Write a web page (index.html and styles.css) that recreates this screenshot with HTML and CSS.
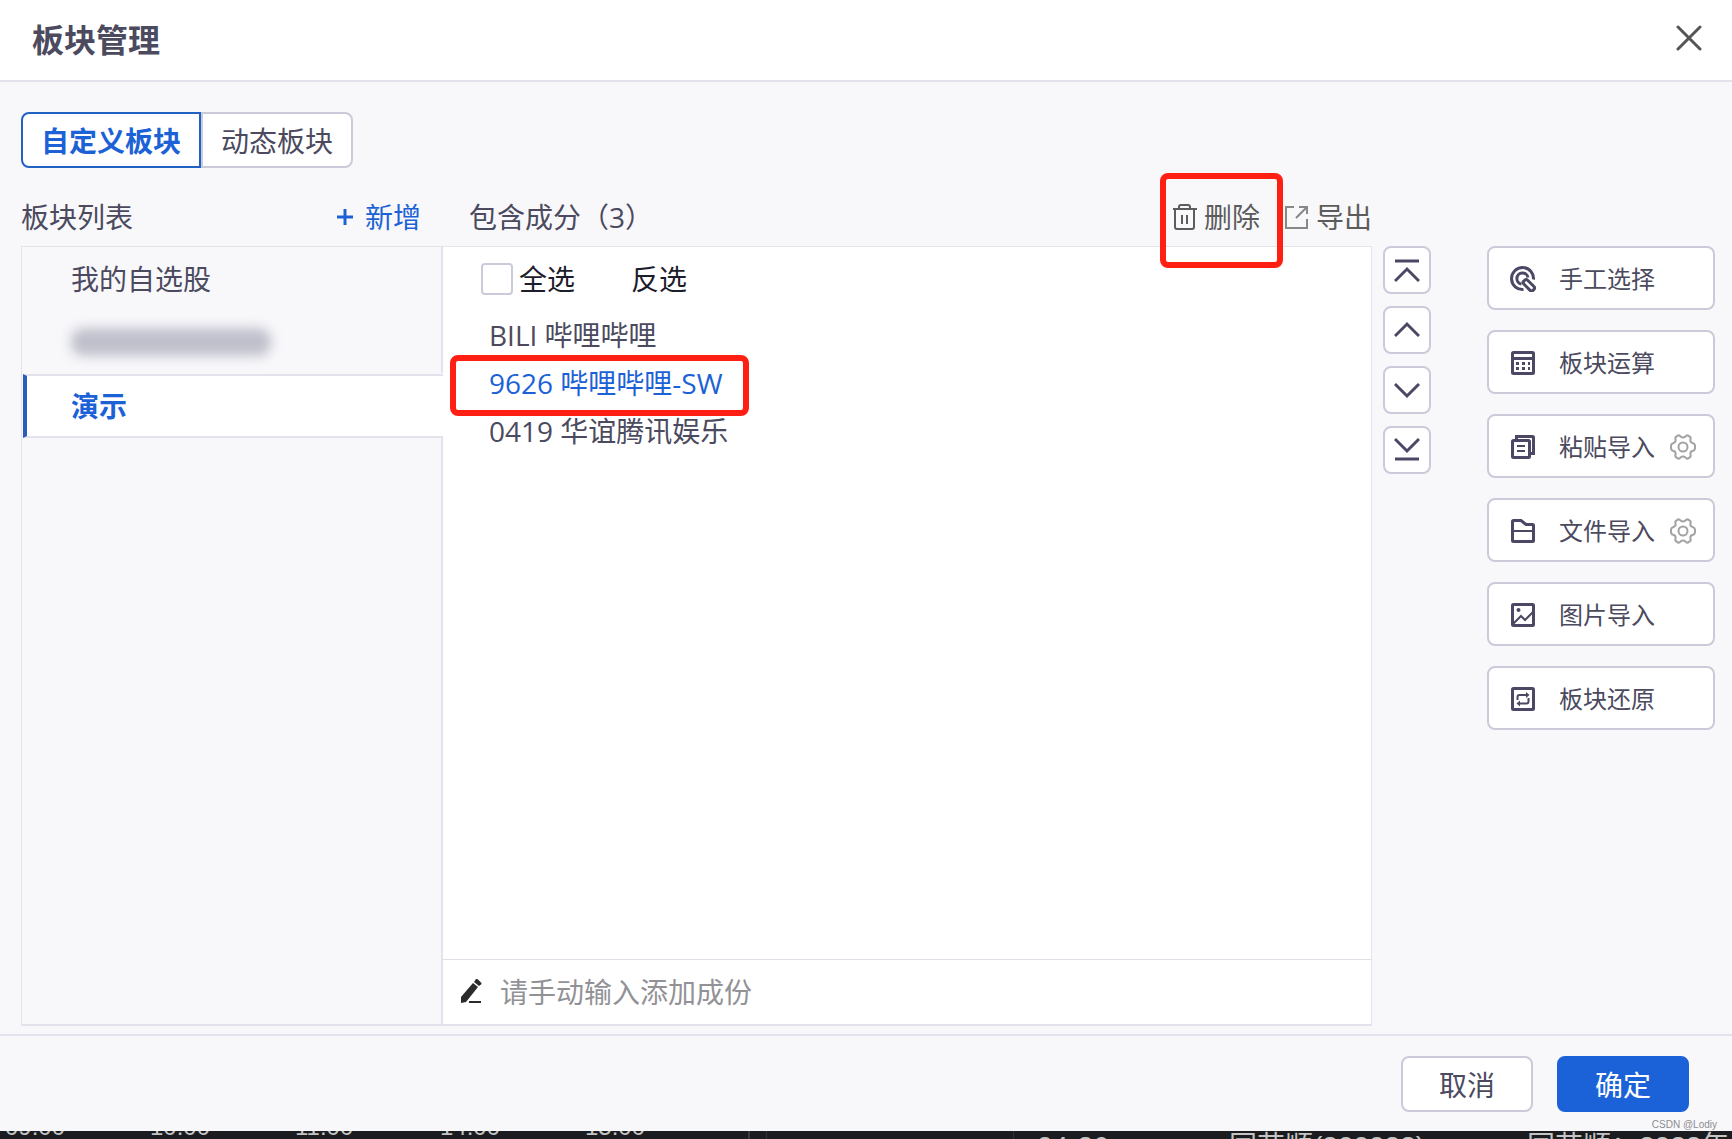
FILE: index.html
```html
<!DOCTYPE html>
<html lang="zh-CN">
<head>
  <meta charset="UTF-8" />
  <meta name="viewport" content="width=device-width, initial-scale=1.0"/>
  <title>板块管理</title>
  <link rel="stylesheet" href="styles.css">
</head>
<body>
  <!-- 图标 -->
  <svg class="sprite" aria-hidden="true">
    <symbol id="gear" viewBox="0 0 26 26">
      <path d="M8 1.500 Q9.500 1 10.500 2.500 Q13 4.600 15.500 2.500 Q16.500 1 18 1.500 L20 2.800 Q21.200 4 20.400 5.600 Q20 8.600 23 9.200 Q24.600 9.600 25 11.500 V14.500 Q24.600 16.400 23 16.800 Q20 17.400 20.400 20.400 Q21.200 22 20 23.200 L18 24.500 Q16.500 25 15.500 23.500 Q13 21.400 10.500 23.500 Q9.500 25 8 24.500 L6 23.200 Q4.800 22 5.600 20.400 Q6 17.400 3 16.800 Q1.400 16.400 1 14.500 V11.500 Q1.400 9.600 3 9.200 Q6 8.600 5.600 5.600 Q4.800 4 6 2.800 Z"/>
      <circle cx="13" cy="13" r="4.5"/>
    </symbol>
  </svg>

  <header class="header">
    <h1>板块管理</h1>
    <button class="close" aria-label="关闭">
      <svg width="26" height="26" viewBox="0 0 26 26"><path d="M2 2 L24 24 M24 2 L2 24"/></svg>
    </button>
  </header>

  <main class="content">
    <div class="tabs">
      <button class="tab ativo">自定义板块</button>
      <button class="tab">动态板块</button>
    </div>

    <div class="workspace">
      <section class="board">
        <div class="heads">
          <div class="head-list">
            <span>板块列表</span>
            <button class="add">
              <svg width="16" height="16" viewBox="0 0 16 16"><path d="M8 0 V16 M0 8 H16"/></svg>
              新增
            </button>
          </div>
          <div class="head-items">
            <span>包含成分（3）</span>
            <div class="actions">
              <button class="action marked">
                <svg width="24" height="28" viewBox="0 0 24 28"><path d="M0 6 H24 M6 6 V4 Q6 2 8 2 H15 Q17 2 17 4 V6 M2 6 V24 Q2 26 4 26 H19 Q21 26 21 24 V6 M9 12 V21 M14 12 V21"/></svg>
                删除
              </button>
              <button class="action light">
                <svg width="24" height="28" viewBox="0 0 24 28"><path d="M9 4 H1 V25 H22 V16 M14 4 H22 V11 M22 4 L11 15"/></svg>
                导出
              </button>
            </div>
          </div>
        </div>

        <div class="panel">
          <nav class="list">
            <button class="list-item">我的自选股</button>
            <button class="list-item" aria-label="已隐藏"><span class="hidden-name"></span></button>
            <button class="list-item ativo">演示</button>
            <div class="list-rest"></div>
          </nav>

          <div class="items">
            <div class="select-row">
              <input type="checkbox" id="all">
              <label for="all">全选</label>
              <button class="invert">反选</button>
            </div>
            <ul class="stocks">
              <li>BILI 哔哩哔哩</li>
              <li class="chosen"><span class="marked">9626 哔哩哔哩-SW</span></li>
              <li>0419 华谊腾讯娱乐</li>
            </ul>
            <div class="manual">
              <svg width="24" height="26" viewBox="0 0 24 26"><path d="M1 24 V18 L13 4 L18 8 L6 23 Z M14 3 L16 0 Q17 -0.5 18 0.5 L21 3.5 Q22 4.5 21 5.5 L19 7 Z M9 22 H21 V24 H9 Z"/></svg>
              <input type="text" placeholder="请手动输入添加成份" aria-label="添加成份">
            </div>
          </div>
        </div>
      </section>

      <div class="order">
        <button aria-label="置顶"><svg width="26" height="26" viewBox="0 0 26 26"><path d="M1 4 H25 M1 24 L13 12 L25 24"/></svg></button>
        <button aria-label="上移"><svg width="26" height="26" viewBox="0 0 26 26"><path d="M1 19 L13 7 L25 19"/></svg></button>
        <button aria-label="下移"><svg width="26" height="26" viewBox="0 0 26 26"><path d="M1 7 L13 19 L25 7"/></svg></button>
        <button aria-label="置底"><svg width="26" height="26" viewBox="0 0 26 26"><path d="M1 2 L13 14 L25 2 M1 22 H25"/></svg></button>
      </div>

      <div class="tools">
        <div class="tool">
          <button class="tool-main">
            <svg width="26" height="26" viewBox="0 0 26 26"><path d="M13.5 23.5 A11 11 0 1 1 23.5 13.5 M11.5 18 A5.6 5.6 0 1 1 18 11.5"/><rect x="12.6" y="16.6" width="13" height="5.4" rx="2" transform="rotate(45 19 19)"/></svg>
            手工选择
          </button>
        </div>
        <div class="tool">
          <button class="tool-main">
            <svg width="26" height="26" viewBox="0 0 26 26"><rect x="2.5" y="2.5" width="21" height="21" rx="1"/><path d="M2 8.500 H24"/><path class="dots" d="M6 13.500 H20 M6 18.500 H20"/></svg>
            板块运算
          </button>
        </div>
        <div class="tool">
          <button class="tool-main">
            <svg width="26" height="26" viewBox="0 0 26 26"><rect x="2.500" y="6.500" width="17" height="17" rx="1"/><path d="M6.500 6 V2.500 H22.500 Q23.500 2.500 23.500 3.500 V19.500 H20"/><path class="thin" d="M7 12 H15 M7 17 H15"/></svg>
            粘贴导入
          </button>
          <button class="setup" aria-label="设置"><svg width="26" height="26"><use href="#gear"/></svg></button>
        </div>
        <div class="tool">
          <button class="tool-main">
            <svg width="26" height="26" viewBox="0 0 26 26"><path d="M2.500 3.500 Q2.500 2.500 3.500 2.500 H11 L16 6.500 H22.500 Q23.500 6.500 23.500 7.500 V22.500 Q23.500 23.500 22.500 23.500 H3.500 Q2.500 23.500 2.500 22.500 Z"/><path class="thin" d="M3 13 H23"/></svg>
            文件导入
          </button>
          <button class="setup" aria-label="设置"><svg width="26" height="26"><use href="#gear"/></svg></button>
        </div>
        <div class="tool">
          <button class="tool-main">
            <svg width="26" height="26" viewBox="0 0 26 26"><rect x="2.500" y="2.500" width="21" height="21" rx="1"/><path class="thin" d="M3 22 L11 14 L15 18 L23 10"/><circle class="solid" cx="8.500" cy="8" r="2"/></svg>
            图片导入
          </button>
        </div>
        <div class="tool">
          <button class="tool-main">
            <svg width="26" height="26" viewBox="0 0 26 26"><rect x="2.500" y="2.500" width="21" height="21" rx="1"/><path class="thin" d="M7.500 14 V11 Q7.500 9 9.500 9 H17 M18.500 12 V15.500 Q18.500 17.500 16.500 17.500 H9"/><path class="solid" d="M16 6 L19.500 9 L16 12 Z M10 14.500 L6.500 17.500 L10 20.500 Z"/></svg>
            板块还原
          </button>
        </div>
      </div>
    </div>
  </main>

  <footer class="footer">
    <button class="btn">取消</button>
    <button class="btn primary">确定</button>
    <span class="watermark">CSDN @Lodiy</span>
  </footer>

  <!-- 底部露出的行情窗口 -->
  <div class="behind">
    <div class="axis">
      <span>09:00</span><span>10:00</span><span>11:00</span><span>14:00</span><span>15:00</span>
    </div>
    <div class="split"></div>
    <div class="blank"></div>
    <div class="news">
      <span class="date">04-26</span>
      <span class="name">同花顺(300033)</span>
      <span class="title">同花顺：2022年</span>
    </div>
  </div>
</body>
</html>
```

FILE: styles.css
```css
* {
  box-sizing: border-box;
}

body {
  margin: 0;
  min-height: 100vh;
  display: flex;
  flex-direction: column;
  font-family: "Open Sans", "Noto Sans CJK SC", sans-serif;
  font-size: 28px;
  line-height: 40px;
  color: #4b4a5e;
  background-color: #f8f8fb;
}

button,
input {
  font: inherit;
  color: inherit;
  margin: 0;
  padding: 0;
  border: none;
  background: none;
}

button {
  cursor: pointer;
  white-space: nowrap;
}

svg {
  display: block;
  flex: none;
  fill: none;
  stroke: currentColor;
  stroke-width: 2;
}

.sprite {
  position: absolute;
  width: 0;
  height: 0;
}

/* 标题栏 */
.header {
  height: 82px;
  display: flex;
  align-items: center;
  justify-content: space-between;
  padding: 0 30px 0 32px;
  background-color: #ffffff;
  border-bottom: 2px solid #e3e3ee;
}

.header h1 {
  margin: 0;
  font-size: 32px;
  font-weight: 700;
}

.close {
  padding-bottom: 4px;
  color: #555555;
}

.close svg {
  stroke-width: 3;
  stroke-linecap: round;
}

.content {
  flex: 1;
  display: flex;
  flex-direction: column;
  padding: 30px 17px 8px 21px;
}

.tabs {
  display: flex;
}

.tab {
  height: 56px;
  padding: 2px 18px 0;
  border: 2px solid #cbcadb;
  border-radius: 0 8px 8px 0;
  background-color: #ffffff;
}

.tab.ativo {
  border-color: #1f62c4;
  border-radius: 8px 0 0 8px;
  color: #1c62d6;
  font-weight: 700;
}

.workspace {
  flex: 1;
  display: flex;
  padding-top: 20px;
}

.board {
  flex: 1;
  display: flex;
  flex-direction: column;
}

.heads {
  display: flex;
  height: 58px;
  align-items: center;
}

.head-list {
  width: 422px;
  display: flex;
  justify-content: space-between;
  padding-right: 22px;
}

.add {
  display: flex;
  align-items: center;
  gap: 12px;
  color: #1c62d6;
}

.add svg {
  stroke-width: 3;
}

.head-items {
  flex: 1;
  display: flex;
  justify-content: space-between;
  padding-left: 26px;
}

.actions {
  display: flex;
  gap: 25px;
}

.action {
  display: flex;
  align-items: center;
  gap: 7px;
  color: #5c5c5c;
}

.action.light svg {
  color: #888888;
}

/* 红色标注框 */
.marked {
  position: relative;
}

.marked::after {
  content: "";
  position: absolute;
  inset: -24px -23px -31px -13px;
  border: 6px solid #ff2013;
  border-radius: 8px;
  pointer-events: none;
}

.chosen .marked::after {
  inset: -9px -26px -14px -39px;
}

.panel {
  flex: 1;
  display: flex;
  border: 1px solid #e3e3ea;
  border-bottom: 2px solid #e3e3ee;
}

.list {
  width: 421px;
  display: flex;
  flex-direction: column;
}

.list-item {
  height: 63px;
  padding-left: 49px;
  text-align: left;
  border-right: 2px solid #e3e3ee;
}

.list-item.ativo {
  height: 64px;
  padding-left: 44px;
  margin: 1px 0 0 1px;
  border: solid #e3e3ee;
  border-width: 2px 0;
  border-left: 4px solid #2a5db8;
  background-color: #ffffff;
  color: #1c62d6;
  font-weight: 700;
}

.hidden-name {
  display: block;
  width: 200px;
  height: 28px;
  border-radius: 12px;
  background-color: #c0c0cc;
  filter: blur(6px);
}

.list-rest {
  flex: 1;
  border-right: 2px solid #e3e3ee;
}

.items {
  flex: 1;
  display: flex;
  flex-direction: column;
  background-color: #ffffff;
}

.select-row {
  display: flex;
  align-items: center;
  height: 64px;
  padding-left: 38px;
  color: #1d1c2b;
}

.select-row input {
  appearance: none;
  width: 32px;
  height: 32px;
  margin-right: 6px;
  border: 2px solid #cbcadb;
  border-radius: 4px;
}

.invert {
  margin-left: 56px;
}

.stocks {
  flex: 1;
  margin: 0;
  padding: 0 0 0 46px;
  list-style: none;
  line-height: 48px;
}

.stocks .chosen {
  color: #1c62d6;
}

.manual {
  display: flex;
  align-items: center;
  gap: 16px;
  height: 65px;
  padding-left: 17px;
  border-top: 1px solid #dedee6;
}

.manual svg {
  fill: #2b2b2b;
  stroke: none;
}

.manual input {
  flex: 1;
  outline: none;
}

.manual input::placeholder {
  color: #929296;
  opacity: 1;
}

/* 排序按钮 */
.order {
  display: flex;
  flex-direction: column;
  gap: 12px;
  padding-top: 58px;
  margin-left: 11px;
}

.order button {
  width: 48px;
  height: 48px;
  display: flex;
  align-items: center;
  justify-content: center;
  border: 2px solid #cbcadb;
  border-radius: 8px;
  background-color: #ffffff;
}

.order svg {
  stroke: #4a4864;
  stroke-width: 3;
}

/* 右侧工具 */
.tools {
  width: 228px;
  display: flex;
  flex-direction: column;
  gap: 20px;
  padding-top: 58px;
  margin-left: 56px;
}

.tool {
  height: 64px;
  display: flex;
  align-items: center;
  padding-top: 1px;
  border: 2px solid #cbcadb;
  border-radius: 8px;
  background-color: #ffffff;
  font-size: 24px;
}

.tool-main {
  display: flex;
  align-items: center;
  gap: 23px;
  padding-left: 21px;
}

.tool-main svg {
  stroke: #4a4864;
  stroke-width: 3;
}

.tool-main .thin {
  stroke-width: 2;
}

.tool-main .dots {
  stroke-dasharray: 3 3;
}

.tool-main .solid {
  fill: #4a4864;
  stroke: none;
}

.setup {
  margin-left: 15px;
  color: #a3a3a3;
}

.footer {
  position: relative;
  display: flex;
  justify-content: flex-end;
  gap: 24px;
  padding: 20px 43px 19px;
  border-top: 2px solid #e3e3ee;
}

.btn {
  width: 132px;
  height: 56px;
  padding-top: 2px;
  border: 2px solid #cbcadb;
  border-radius: 8px;
  background-color: #ffffff;
}

.btn.primary {
  border-color: #1b62d8;
  background-color: #1b62d8;
  color: #ffffff;
}

.watermark {
  position: absolute;
  right: 15px;
  bottom: 0;
  font-family: "Liberation Sans", Arial, sans-serif;
  font-size: 10px;
  line-height: 12px;
  color: #8c8c90;
}

.behind {
  height: 8px;
  display: flex;
  overflow: hidden;
  background-color: #1b1c20;
  color: #c4c4c4;
  font-family: "Liberation Sans", "Noto Sans CJK SC", sans-serif;
  white-space: nowrap;
}

.axis {
  width: 750px;
  display: flex;
  align-items: flex-end;
  font-size: 24px;
  line-height: 24px;
  border-right: 2px solid #3a3b40;
}

.axis span {
  width: 145px;
  padding-left: 5px;
}

.split {
  width: 17px;
  border-right: 1px solid #303136;
}

.blank {
  width: 247px;
  border-right: 1px solid #303136;
}

.news {
  flex: 1;
  display: flex;
  align-items: flex-start;
  overflow: hidden;
  padding-left: 23px;
  line-height: 32px;
}

.date {
  width: 192px;
}

.name {
  width: 298px;
}
```
